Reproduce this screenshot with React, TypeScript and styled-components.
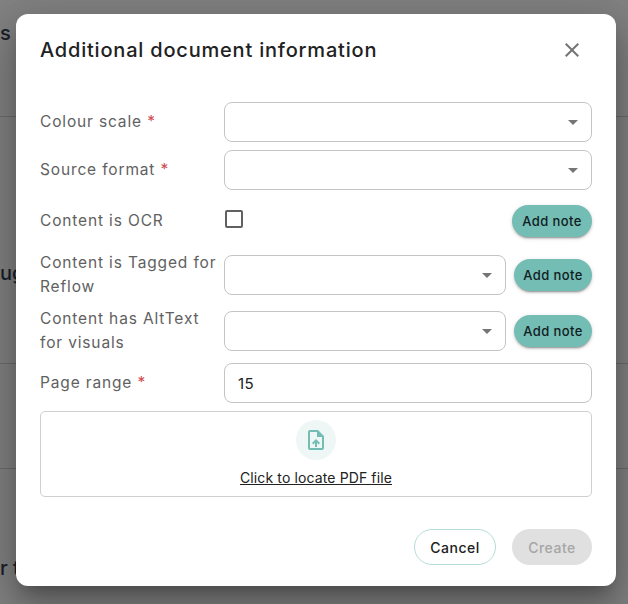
import React from "react";
import styled, { createGlobalStyle } from "styled-components";

const GlobalStyle = createGlobalStyle`
  html, body {
    margin: 0;
    padding: 0;
    background: #828282;
  }
  * {
    box-sizing: border-box;
  }
`;

const FONT = `Inter, "Noto Sans", "Liberation Sans", sans-serif`;

const Page = styled.div`
  position: relative;
  width: 628px;
  height: 604px;
  overflow: hidden;
  background: #828282;
  font-family: ${FONT};
`;

const PageRow = styled.div<{ $height: number; $textTop?: number; $indent?: number }>`
  height: ${(props) => props.$height}px;
  padding-top: ${(props) => props.$textTop ?? 0}px;
  padding-left: ${(props) => props.$indent ?? 0}px;
  border-bottom: 1px solid #6c6c6c;
  font-size: 20px;
  line-height: 24px;
  font-weight: 500;
  white-space: nowrap;
  color: #1a2029;
`;

const PageTail = styled(PageRow)`
  border-bottom: 0;
`;

const Backdrop = styled.div`
  position: absolute;
  inset: 0;
  display: flex;
  padding: 14px 12px 18px 16px;
  justify-content: flex-start;
`;

const Dialog = styled.div`
  width: 600px;
  height: 572px;
  background: #fff;
  border-radius: 12px;
  padding: 0 24px;
  display: flex;
  flex-direction: column;
  box-shadow: 0 11px 15px -7px rgba(0, 0, 0, 0.24), 0 24px 38px 3px rgba(0, 0, 0, 0.18),
    0 9px 46px 8px rgba(0, 0, 0, 0.15);
`;

const DialogHeader = styled.div`
  height: 72px;
  margin-bottom: 16px;
  display: flex;
  justify-content: space-between;
  align-items: center;
`;

const Title = styled.h2`
  margin: 0;
  font-size: 20px;
  font-weight: 500;
  letter-spacing: 0.8px;
  color: #212121;
`;

const CloseButton = styled.button`
  width: 24px;
  height: 24px;
  margin-right: 8px;
  padding: 0;
  border: 0;
  background: none;
  color: #757575;
  display: flex;
`;

const Form = styled.div`
  display: flex;
  flex-direction: column;
  gap: 8px;
`;

const Row = styled.div<{ $height: number }>`
  height: ${(props) => props.$height}px;
  display: grid;
  grid-template-columns: 184px 1fr auto;
  align-items: center;
`;

const Label = styled.label`
  padding-right: 6px;
  font-size: 15.5px;
  line-height: 24px;
  letter-spacing: 0.85px;
  color: #616161;
`;

const Required = styled.span`
  color: #cf4a50;
`;

const SelectBox = styled.div<{ $wide?: boolean }>`
  grid-column: ${(props) => (props.$wide ? "2 / 4" : "2")};
  height: 40px;
  border: 1px solid #c4c4c4;
  border-radius: 8px;
  display: flex;
  align-items: center;
  justify-content: flex-end;
  padding-right: 13px;
`;

const Caret = styled.span`
  width: 0;
  height: 0;
  border-left: 5px solid transparent;
  border-right: 5px solid transparent;
  border-top: 5px solid #757575;
`;

const TextBox = styled.div`
  grid-column: 2 / 4;
  height: 40px;
  border: 1px solid #c4c4c4;
  border-radius: 8px;
  display: flex;
  align-items: center;
  padding-left: 13px;
  font-size: 15px;
  letter-spacing: 0.3px;
  color: #212121;
`;

const CheckBox = styled.span`
  width: 18px;
  height: 18px;
  margin: 0 0 3px 1px;
  border: 2px solid #616161;
  border-radius: 2px;
`;

const NoteCell = styled.div`
  margin-left: 8px;
  grid-column: 3;
`;

const NoteButton = styled.button<{ $wide?: boolean }>`
  width: ${(props) => (props.$wide ? 80 : 78)}px;
  height: 32px;
  padding: 0;
  border: 0;
  border-radius: 16px;
  background: #74bdb5;
  color: #10201f;
  font-family: ${FONT};
  font-size: 13px;
  font-weight: 500;
  letter-spacing: 0.4px;
  display: block;
  box-shadow: 0 3px 1px -2px rgba(0, 0, 0, 0.2), 0 2px 2px 0 rgba(0, 0, 0, 0.14),
    0 1px 5px 0 rgba(0, 0, 0, 0.12);
`;

const UploadArea = styled.div`
  height: 86px;
  border: 1px solid #d0d0d0;
  border-radius: 5px;
  padding-top: 8px;
  display: flex;
  flex-direction: column;
  align-items: center;
`;

const UploadBadge = styled.span`
  width: 40px;
  height: 40px;
  border-radius: 50%;
  background: #eef7f5;
  color: #74bdb5;
  display: flex;
  align-items: center;
  justify-content: center;
`;

const UploadLink = styled.span`
  margin-top: 8px;
  font-size: 14px;
  line-height: 20px;
  letter-spacing: 0.12px;
  color: #212121;
  text-decoration: underline;
`;

const Footer = styled.div`
  margin-top: 32px;
  display: flex;
  justify-content: flex-end;
  gap: 16px;
`;

const FooterButton = styled.button`
  height: 36px;
  padding: 0;
  border-radius: 18px;
  font-family: ${FONT};
  font-size: 14px;
  font-weight: 500;
  letter-spacing: 0.5px;
`;

const CancelButton = styled(FooterButton)`
  width: 82px;
  border: 1px solid #b5dcd8;
  background: #fff;
  color: #212121;
`;

const CreateButton = styled(FooterButton)`
  width: 80px;
  border: 0;
  background: #e0e0e0;
  color: #a6a6a6;
`;

const Select = ({ wide }: { wide?: boolean }) => (
  <SelectBox $wide={wide}>
    <Caret />
  </SelectBox>
);

const App: React.FC = () => {
  return (
    <Page>
      <GlobalStyle />
      <PageRow $height={117} $textTop={21} $indent={-9}>
        s
      </PageRow>
      <PageRow $height={247} $textTop={144} $indent={-3}>
        ug
      </PageRow>
      <PageRow $height={105} />
      <PageTail $height={135} $textTop={87}>
        r t
      </PageTail>
      <Backdrop>
        <Dialog>
          <DialogHeader>
            <Title>Additional document information</Title>
            <CloseButton aria-label="Close">
              <svg width="24" height="24" viewBox="0 0 24 24" fill="currentColor">
                <path d="M19 6.41 17.59 5 12 10.59 6.41 5 5 6.41 10.59 12 5 17.59 6.41 19 12 13.41 17.59 19 19 17.59 13.41 12z" />
              </svg>
            </CloseButton>
          </DialogHeader>
          <Form>
            <Row $height={40}>
              <Label>
                Colour scale <Required>*</Required>
              </Label>
              <Select wide />
            </Row>
            <Row $height={40}>
              <Label>
                Source format <Required>*</Required>
              </Label>
              <Select wide />
            </Row>
            <Row $height={45}>
              <Label>Content is OCR</Label>
              <CheckBox />
              <NoteCell>
                <NoteButton $wide>Add note</NoteButton>
              </NoteCell>
            </Row>
            <Row $height={48}>
              <Label>Content is Tagged for Reflow</Label>
              <Select />
              <NoteCell>
                <NoteButton>Add note</NoteButton>
              </NoteCell>
            </Row>
            <Row $height={48}>
              <Label>Content has AltText for visuals</Label>
              <Select />
              <NoteCell>
                <NoteButton>Add note</NoteButton>
              </NoteCell>
            </Row>
            <Row $height={40}>
              <Label>
                Page range <Required>*</Required>
              </Label>
              <TextBox>15</TextBox>
            </Row>
            <UploadArea>
              <UploadBadge>
                <svg width="24" height="24" viewBox="0 0 24 24" fill="currentColor">
                  <path d="M14 2H6c-1.1 0-1.99.9-1.99 2L4 20c0 1.1.89 2 1.99 2H18c1.1 0 2-.9 2-2V8l-6-6zm4 18H6V4h7v5h5v11zM8 15.01l1.41 1.41L11 14.84V19h2v-4.16l1.59 1.59L16 15.01 12.01 11z" />
                </svg>
              </UploadBadge>
              <UploadLink>Click to locate PDF file</UploadLink>
            </UploadArea>
          </Form>
          <Footer>
            <CancelButton>Cancel</CancelButton>
            <CreateButton disabled>Create</CreateButton>
          </Footer>
        </Dialog>
      </Backdrop>
    </Page>
  );
};

export default App;
